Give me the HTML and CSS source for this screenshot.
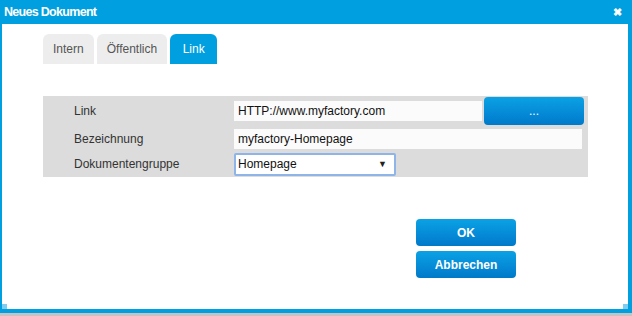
FILE: index.html
```html
<!DOCTYPE html>
<html lang="de">
<head>
    <meta charset="UTF-8">
    <title>Neues Dokument</title>
    <link rel="stylesheet" href="styles.css">
</head>
<body>
    <div class="window">
        <div class="titlebar">
            <span class="title">Neues Dokument</span>
            <span class="close">&#x2716;</span>
        </div>

        <div class="window-body">
            <div class="tabs">
                <div class="tab">Intern</div>
                <div class="tab">Öffentlich</div>
                <div class="tab active">Link</div>
            </div>

            <div class="form-panel">
                <div class="form-row">
                    <label class="form-label">Link</label>
                    <input class="form-input short" type="text" value="HTTP://www.myfactory.com">
                    <button class="btn btn-browse">...</button>
                </div>
                <div class="form-row">
                    <label class="form-label">Bezeichnung</label>
                    <input class="form-input wide" type="text" value="myfactory-Homepage">
                </div>
                <div class="form-row">
                    <label class="form-label">Dokumentengruppe</label>
                    <div class="form-select">
                        <span>Homepage</span>
                        <span class="arrow">&#9660;</span>
                    </div>
                </div>
            </div>

            <div class="actions">
                <button class="btn btn-action">OK</button>
                <button class="btn btn-action">Abbrechen</button>
            </div>

            <span class="grip grip-left"></span>
            <span class="grip grip-right"></span>
        </div>
    </div>
</body>
</html>
```

FILE: styles.css
```css
* {
    margin: 0;
    padding: 0;
    box-sizing: border-box;
}

body {
    font-family: "Liberation Sans", Arial, sans-serif;
    font-size: 12px;
    color: #333;
    background: #c4c4c4;
    width: 632px;
    height: 316px;
    overflow: hidden;
}

.window {
    height: 313px;
    display: flex;
    flex-direction: column;
    background: #009fe0;
}

.titlebar {
    height: 24px;
    display: flex;
    align-items: center;
    justify-content: space-between;
    padding: 0 10px 0 4px;
    color: white;
}

.title {
    font-size: 12.5px;
    font-weight: bold;
    letter-spacing: -0.7px;
}

.close {
    font-size: 11px;
    font-weight: bold;
}

.window-body {
    position: relative;
    flex: 1;
    background: white;
    margin: 0 4px 4px 2px;
    padding: 10px 0 0 41px;
}

.tabs {
    display: flex;
    gap: 3px;
}

.tab {
    height: 30px;
    padding: 0 10px;
    display: flex;
    align-items: center;
    justify-content: center;
    background: #ededed;
    color: #555;
    font-size: 12px;
    border-radius: 6px 6px 0 0;
}

.tab.active {
    min-width: 47px;
    background: #009fe0;
    color: white;
}

.form-panel {
    margin-top: 32px;
    width: 545px;
    height: 81px;
    background: #dcdcdc;
    padding: 0 0 0 31px;
    display: flex;
    flex-direction: column;
}

.form-row {
    display: flex;
    align-items: center;
}

.form-row:nth-child(1) {
    height: 29px;
}

.form-row:nth-child(2) {
    height: 24px;
    margin-top: 2px;
}

.form-row:nth-child(3) {
    height: 26px;
}

.form-label {
    width: 160px;
    color: #333;
}

.form-input {
    height: 20px;
    border: none;
    background: #fbfbfb;
    font-family: inherit;
    font-size: 12px;
    color: #111;
    padding: 0 4px;
    outline: none;
}

.form-input.short {
    width: 248px;
}

.form-input.wide {
    width: 348px;
}

.form-select {
    width: 162px;
    height: 23px;
    border: 2px solid #8fb4e8;
    border-radius: 2px;
    background: white;
    display: flex;
    align-items: center;
    justify-content: space-between;
    padding: 0 7px 0 2px;
    color: #111;
}

.arrow {
    font-size: 9px;
    color: #222;
}

.btn {
    border: none;
    border-radius: 4px;
    color: white;
    font-family: inherit;
    font-size: 12px;
    background: linear-gradient(to bottom, #0aa2e4 0%, #0589d6 60%, #0079c9 100%);
    cursor: pointer;
}

.btn-browse {
    width: 100px;
    height: 28px;
    margin-left: 2px;
    font-weight: normal;
}

.actions {
    margin: 42px 0 0 373px;
    display: flex;
    flex-direction: column;
    gap: 5px;
}

.btn-action {
    width: 100px;
    height: 27px;
    font-weight: bold;
}

.grip {
    position: absolute;
    bottom: 0;
    width: 5px;
    height: 5px;
    background: #7fcdf0;
}

.grip-left {
    left: 0;
}

.grip-right {
    right: 0;
}
```
